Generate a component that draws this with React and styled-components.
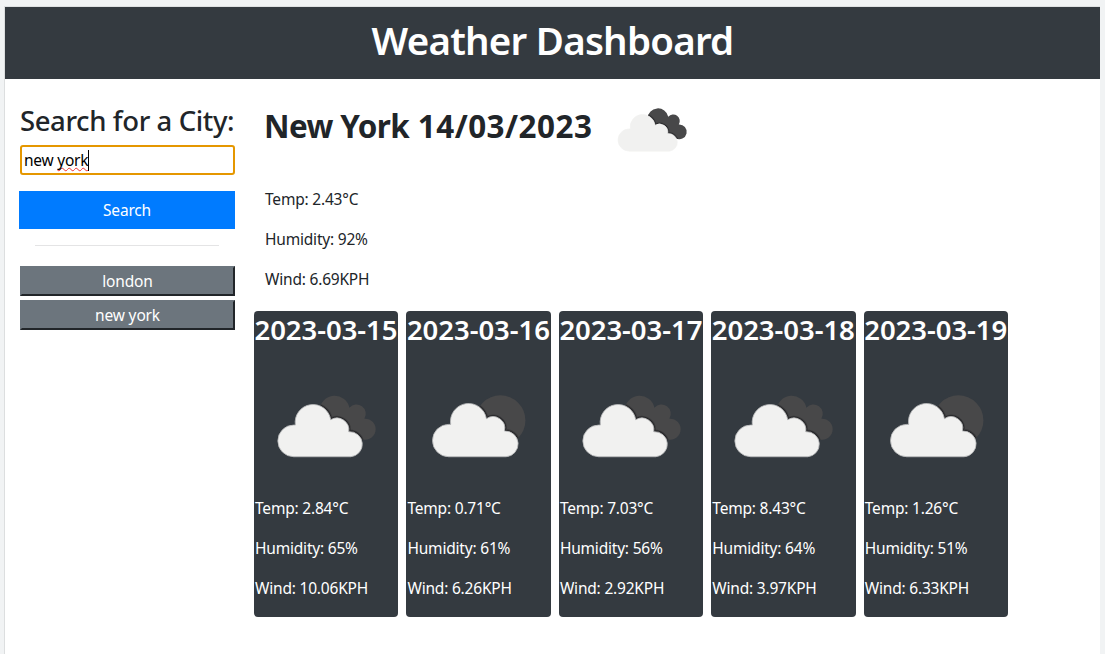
import React, { useId } from 'react';
import styled, { createGlobalStyle } from 'styled-components';

const GlobalStyle = createGlobalStyle`
  *, *::before, *::after { box-sizing: border-box; }
  body {
    margin: 0;
    background: #f1f3f4;
    color: #212529;
    font: 400 15.5px/24px "Noto Sans", sans-serif;
    letter-spacing: -0.2px;
  }
`;

const Frame = styled.div`
  height: 654px;
  padding: 6px 5px 0 4px;
  overflow: hidden;
`;

const Page = styled.div`
  height: 100%;
  border-top: 1px solid #dfe1e2;
  border-left: 1px solid #dcdedf;
  background: #fff;
`;

const Header = styled.header`
  height: 72px;
  padding-top: 9px;
  background: #343a40;
  color: #fff;
  text-align: center;
`;

const Title = styled.h1`
  margin: 0;
  font-size: 38.5px;
  font-weight: 600;
  line-height: 48px;
  letter-spacing: -0.78px;
`;

const Layout = styled.div`
  display: flex;
`;

const Sidebar = styled.aside`
  display: flex;
  flex-direction: column;
  width: 230px;
  padding: 25px 0 0 14px;
`;

const SidebarTitle = styled.h3`
  margin: 0 0 7px 1px;
  font-size: 27.5px;
  font-weight: 500;
  line-height: 34px;
  letter-spacing: -0.4px;
  white-space: nowrap;
`;

const SearchField = styled.div`
  display: flex;
  align-items: center;
  height: 30px;
  margin-left: 1px;
  padding-left: 2px;
  border: 2px solid #e59700;
  border-radius: 3px;
  color: #000;
  letter-spacing: -0.25px;
  white-space: pre;
`;

const Misspelled = styled.span`
  text-decoration: underline wavy #e33 1px;
  text-underline-offset: 1px;
  text-decoration-skip-ink: none;
`;

const Caret = styled.span`
  width: 1px;
  height: 21px;
  background: #000;
`;

const SearchButton = styled.button`
  height: 38px;
  margin-top: 16px;
  padding: 0;
  border: 0;
  background: #007bff;
  color: #fff;
  font: inherit;
  letter-spacing: inherit;
`;

const Divider = styled.hr`
  width: 184px;
  margin: 16px 0 20px 16px;
  border: 0;
  border-top: 1px solid #e4e4e5;
`;

const HistoryButton = styled.button`
  height: 30px;
  margin: 0 0 4px 1px;
  padding: 0;
  border: 2px solid;
  border-color: #6c757d #212529 #212529 #6c757d;
  background: #6c757d;
  color: #fff;
  font: inherit;
  letter-spacing: -0.15px;
`;

const Main = styled.main`
  padding-left: 19px;
`;

const Today = styled.section`
  padding-left: 11px;
`;

const TodayHead = styled.div`
  display: flex;
  gap: 10px;
  height: 100px;
  margin-bottom: 8px;
`;

const TodayTitle = styled.h2`
  width: 327px;
  margin: 27px 0 0;
  font-size: 31.4px;
  font-weight: 700;
  line-height: 40px;
  letter-spacing: 0.5px;
  text-indent: -1px;
  white-space: nowrap;
`;

const City = styled.span`
  letter-spacing: -0.6px;
`;

const Reading = styled.p`
  margin: 0 0 16px;
`;

const Forecast = styled.section`
  display: flex;
  gap: 8px;
  margin-top: 20px;
`;

const Card = styled.article`
  width: 144.45px;
  height: 306px;
  padding: 2px 0 0 1px;
  border-radius: 4px;
  background: #343a40;
  color: #fff;
`;

const CardDate = styled.h3`
  margin: 0 0 7px -0.5px;
  font-size: 27.5px;
  font-weight: 600;
  line-height: 34px;
  letter-spacing: -0.05px;
  white-space: nowrap;
`;

const Icon = styled.svg`
  display: block;
  flex: none;
  width: ${p => p.$size}px;
  height: ${p => p.$size}px;
  margin-bottom: ${p => p.$gap || 0}px;
`;

const brokenBack = 'M209 330A45 45 0 0 1 298 322A28 28 0 0 1 343 355A31.5 31.5 0 1 1 330 414L290 440L215 370Z';
const scatteredBack = 'M220 360A75 75 0 1 1 370 360A75 75 0 1 1 220 360Z';
const brokenFront = 'M131 469A47.5 47.5 0 0 1 131 374H136A53.5 53.5 0 1 1 242 358A36 36 0 0 1 296 394A37.5 37.5 0 0 1 302 469Z';
const scatteredFront = 'M140 469A48.5 48.5 0 0 1 140 372H146A54 54 0 1 1 253 355A35 35 0 0 1 307 392A38.5 38.5 0 0 1 312 469Z';

function WeatherIcon({ kind, size, gap, rim }) {
  const id = useId();
  const back = kind === 'broken' ? brokenBack : scatteredBack;
  const front = kind === 'broken' ? brokenFront : scatteredFront;
  return (
    <Icon $size={size} $gap={gap} viewBox="15 161 427 427">
      <clipPath id={id}><path d={back} /></clipPath>
      <path d={back} fill="#484849" />
      <g clipPath={`url(#${id})`} fill="none" stroke="#202022">
        <path d={front} strokeWidth="13" opacity=".35" />
        <path d={front} strokeWidth="8" opacity=".7" />
      </g>
      <path d={front} fill="#f1f1f0" stroke={rim} strokeWidth="2.5" />
    </Icon>
  );
}

const days = [
  ['2023-03-15', 'broken', '2.84', '65', '10.06'],
  ['2023-03-16', 'scattered', '0.71', '61', '6.26'],
  ['2023-03-17', 'broken', '7.03', '56', '2.92'],
  ['2023-03-18', 'broken', '8.43', '64', '3.97'],
  ['2023-03-19', 'scattered', '1.26', '51', '6.33'],
];

function Readings({ temp, humidity, wind }) {
  return (
    <>
      <Reading>{`Temp: ${temp}°C`}</Reading>
      <Reading>{`Humidity: ${humidity}%`}</Reading>
      <Reading>{`Wind: ${wind}KPH`}</Reading>
    </>
  );
}

export default function App() {
  return (
    <Frame>
      <GlobalStyle />
      <Page>
        <Header><Title>Weather Dashboard</Title></Header>
        <Layout>
          <Sidebar>
            <SidebarTitle>Search for a City:</SidebarTitle>
            <SearchField role="textbox">new <Misspelled>york</Misspelled><Caret /></SearchField>
            <SearchButton>Search</SearchButton>
            <Divider />
            <HistoryButton>london</HistoryButton>
            <HistoryButton>new york</HistoryButton>
          </Sidebar>
          <Main>
            <Today>
              <TodayHead>
                <TodayTitle><City>New York</City> 14/03/2023</TodayTitle>
                <WeatherIcon kind="broken" size={100} rim="#f1f1f0" />
              </TodayHead>
              <Readings temp="2.43" humidity="92" wind="6.69" />
            </Today>
            <Forecast>
              {days.map(([date, kind, temp, humidity, wind]) => (
                <Card key={date}>
                  <CardDate>{date}</CardDate>
                  <WeatherIcon kind={kind} size={142.45} gap={-0.45} rim="#b9bbbc" />
                  <Readings temp={temp} humidity={humidity} wind={wind} />
                </Card>
              ))}
            </Forecast>
          </Main>
        </Layout>
      </Page>
    </Frame>
  );
}
